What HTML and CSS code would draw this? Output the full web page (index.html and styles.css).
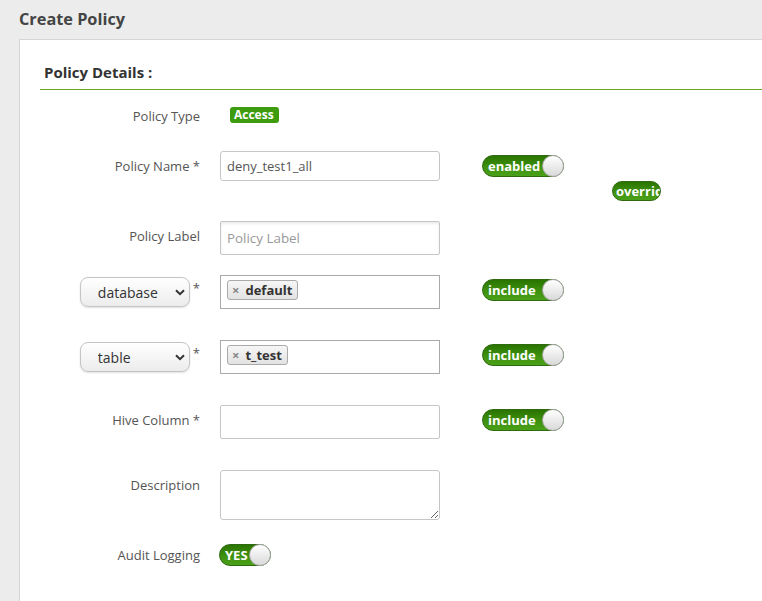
FILE: index.html
```html
<!DOCTYPE html>
<html>
<head>
<meta charset="utf-8">
<link rel="stylesheet" href="styles.css">
</head>
<body>
<h1 class="page-title">Create Policy</h1>
<div class="panel">
  <div class="section-title">Policy Details :</div>
  <div class="form">
    <div class="row row-type">
      <div class="label">Policy Type</div>
      <div class="control"><span class="badge">Access</span></div>
    </div>
    <div class="row row-name">
      <div class="label">Policy Name *</div>
      <div class="control"><input class="text-input h30" type="text" value="deny_test1_all"></div>
      <div class="toggle-cell">
        <span class="toggle w82"><span class="toggle-text">enabled</span><span class="knob"></span></span>
        <span class="override"><span class="toggle-text">override</span></span>
      </div>
    </div>
    <div class="row row-label">
      <div class="label">Policy Label</div>
      <div class="control"><input class="text-input h34 shadowed" type="text" placeholder="Policy Label"></div>
    </div>
    <div class="row row-db">
      <div class="label">
        <span class="select-wrap">
          <select class="select"><option>database</option></select>
          <svg class="chev" width="10" height="7" viewBox="0 0 10 7"><path d="M1 1.2 L5 5.2 L9 1.2" fill="none" stroke="#333" stroke-width="2"/></svg>
        </span>
        <span class="star">*</span>
      </div>
      <div class="control"><div class="tag-input"><span class="tag"><span class="tag-x">×</span>default</span></div></div>
      <div class="toggle-cell"><span class="toggle w82"><span class="toggle-text">include</span><span class="knob"></span></span></div>
    </div>
    <div class="row row-tbl">
      <div class="label">
        <span class="select-wrap">
          <select class="select"><option>table</option></select>
          <svg class="chev" width="10" height="7" viewBox="0 0 10 7"><path d="M1 1.2 L5 5.2 L9 1.2" fill="none" stroke="#333" stroke-width="2"/></svg>
        </span>
        <span class="star">*</span>
      </div>
      <div class="control"><div class="tag-input"><span class="tag"><span class="tag-x">×</span>t_test</span></div></div>
      <div class="toggle-cell"><span class="toggle w82"><span class="toggle-text">include</span><span class="knob"></span></span></div>
    </div>
    <div class="row row-col">
      <div class="label">Hive Column *</div>
      <div class="control"><input class="text-input h34" type="text"></div>
      <div class="toggle-cell"><span class="toggle w82"><span class="toggle-text">include</span><span class="knob"></span></span></div>
    </div>
    <div class="row row-desc">
      <div class="label">Description</div>
      <div class="control"><textarea class="textarea"></textarea></div>
    </div>
    <div class="row row-audit">
      <div class="label">Audit Logging</div>
      <div class="control"><span class="toggle w52 audit-toggle"><span class="toggle-text">YES</span><span class="knob"></span></span></div>
    </div>
  </div>
</div>
</body>
</html>
```
FILE: styles.css
```css
html, body {
  margin: 0;
  padding: 0;
  background: #ececec;
  font-family: "Open Sans", "Liberation Sans", sans-serif;
  color: #444;
  overflow: hidden;
}
.page-title {
  margin: 0;
  height: 39px;
  box-sizing: border-box;
  padding: 7px 0 0 19px;
  font-size: 16.3px;
  line-height: 24px;
  font-weight: 700;
  color: #444;
}
.panel {
  margin-left: 19px;
  border-top: 1px solid #d5d5d5;
  border-left: 1px solid #d5d5d5;
  background: #fff;
  height: 562px;
}
.section-title {
  margin: 23px 0 0 20px;
  padding: 0 0 7px 4px;
  border-bottom: 1px solid #6aa91f;
  font-size: 15px;
  font-weight: 700;
  line-height: 19px;
  color: #333;
}
.form {
  display: flex;
  flex-direction: column;
}
.row {
  display: flex;
  align-items: flex-start;
}
.row-type { margin-top: 11px; height: 30px; }
.row-name { margin-top: 20px; height: 30px; }
.row-label { margin-top: 40px; height: 34px; }
.row-db { margin-top: 20px; height: 34px; }
.row-tbl { margin-top: 31px; height: 34px; }
.row-col { margin-top: 31px; height: 34px; }
.row-desc { margin-top: 31px; height: 50px; }
.row-audit { margin-top: 20px; height: 30px; }

.label {
  width: 180px;
  flex: none;
  box-sizing: border-box;
  padding-top: 5px;
  text-align: right;
  font-size: 13px;
  line-height: 20px;
  color: #555;
  display: flex;
  justify-content: flex-end;
  align-items: flex-start;
}
.control {
  width: 220px;
  margin-left: 20px;
  flex: none;
  display: flex;
  align-items: center;
}
.row-type .control { height: 28px; }
.row-audit .control { height: 30px; }
.badge {
  margin-left: 10px;
  background: #3d9b0d;
  color: #fff;
  font-weight: 700;
  font-size: 12px;
  line-height: 16px;
  padding: 0 5px 0 4px;
  border-radius: 3px;
}
.text-input {
  width: 220px;
  box-sizing: border-box;
  border: 1px solid #c6c6c6;
  border-radius: 3px;
  padding: 0 6px;
  font-family: "Open Sans", "Liberation Sans", sans-serif;
  font-size: 13px;
  color: #555;
  background: #fff;
  outline: none;
  margin: 0;
}
.text-input::placeholder { color: #999; font-size: 13.4px; }
.h30 { height: 30px; }
.h34 { height: 34px; border-radius: 2px; }
.shadowed { box-shadow: inset 0 2px 3px rgba(0,0,0,0.08); }
.textarea {
  width: 220px;
  height: 50px;
  box-sizing: border-box;
  border: 1px solid #c6c6c6;
  border-radius: 3px;
  margin: 0;
  padding: 4px 6px;
  font-family: "Open Sans", sans-serif;
  font-size: 13px;
  display: block;
}
.toggle-cell {
  margin-left: 42px;
  margin-top: 4px;
  position: relative;
}
.toggle {
  position: relative;
  display: block;
  height: 22px;
  box-sizing: border-box;
  border-radius: 11px;
  border: 1px solid #2f6a10;
  background: linear-gradient(#2a7400, #3f9110 55%, #4aa018);
}
.audit-toggle { margin-left: -1px; }
.w82 { width: 82px; }
.w52 { width: 52px; }
.toggle-text {
  position: absolute;
  left: 5px;
  top: 0;
  line-height: 20px;
  font-size: 13px;
  font-weight: 700;
  color: #fff;
  white-space: nowrap;
}
.knob {
  position: absolute;
  right: -1px;
  top: -1px;
  width: 22px;
  height: 22px;
  box-sizing: border-box;
  border-radius: 50%;
  border: 1px solid #a8a8a8;
  background: linear-gradient(#ffffff, #d9d9d9);
}
.override {
  position: absolute;
  left: 130px;
  top: 26px;
  width: 49px;
  height: 20px;
  box-sizing: border-box;
  border-radius: 10px;
  border: 1px solid #2f6a10;
  background: linear-gradient(#2a7400, #3f9110 55%, #4aa018);
  overflow: hidden;
}
.override .toggle-text {
  left: 3px;
  line-height: 18px;
}
.select-wrap {
  position: relative;
  display: block;
  margin-top: -3px;
}
.select {
  appearance: none;
  -webkit-appearance: none;
  width: 110px;
  height: 30px;
  box-sizing: border-box;
  border: 1px solid #c4c4c4;
  border-radius: 8px;
  background: linear-gradient(#ffffff, #ececec);
  box-shadow: 0 1px 2px rgba(0,0,0,0.12);
  font-family: "Open Sans", sans-serif;
  font-size: 14px;
  color: #333;
  padding: 0 0 0 17px;
  margin: 0;
  display: block;
}
.chev {
  position: absolute;
  right: 5px;
  top: 12px;
}
.star {
  margin-left: 3px;
  margin-right: 0;
  line-height: 16px;
}
.tag-input {
  width: 221px;
  height: 34px;
  box-sizing: border-box;
  border: 1px solid #aaa;
  padding: 4px 6px;
  background: #fff;
  display: flex;
  align-items: flex-start;
}
.tag {
  display: block;
  height: 20px;
  box-sizing: border-box;
  border: 1px solid #aaa;
  border-radius: 3px;
  background: linear-gradient(#f6f6f6, #e2e2e2);
  padding: 0 5px 0 4px;
  font-size: 13px;
  font-weight: 700;
  line-height: 18px;
  color: #333;
}
.tag-x {
  color: #888;
  font-size: 13px;
  margin-right: 6px;
}
```
